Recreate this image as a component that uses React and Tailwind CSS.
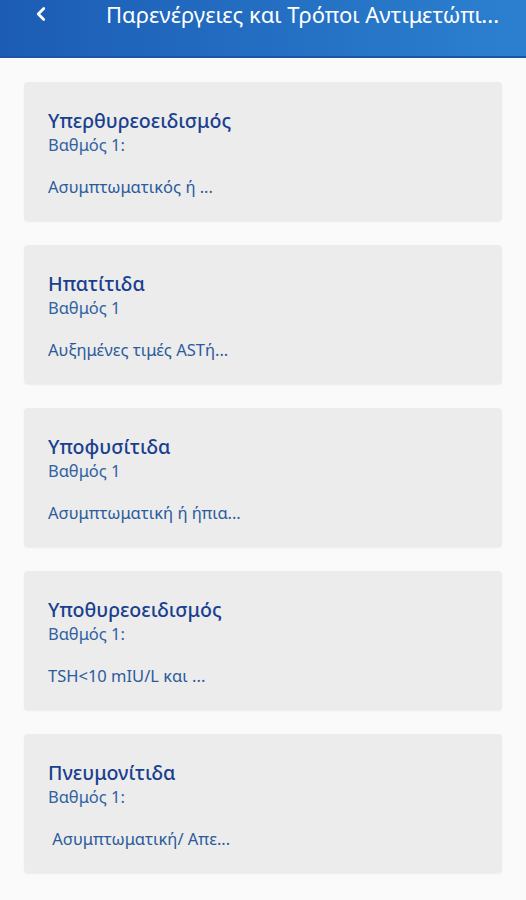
import { ChevronLeft } from 'lucide-react';

const items = [
  { title: 'Υπερθυρεοειδισμός', grade: 'Βαθμός 1:', text: 'Ασυμπτωματικός ή ...' },
  { title: 'Ηπατίτιδα', grade: 'Βαθμός 1', text: 'Αυξημένες τιμές ASTή...' },
  { title: 'Υποφυσίτιδα', grade: 'Βαθμός 1', text: 'Ασυμπτωματική ή ήπια...' },
  { title: 'Υποθυρεοειδισμός', grade: 'Βαθμός 1:', text: 'TSH<10 mIU/L και ...' },
  { title: 'Πνευμονίτιδα', grade: 'Βαθμός 1:', text: ' Ασυμπτωματική/ Απε...' },
];

function Card({ item }) {
  return (
    <div className="h-[139px] rounded-[4px] bg-[#ececec] px-6 pt-[26px] shadow-[0_1px_2px_rgba(0,0,0,0.06)]">
      <h2 className="text-[19.6px] leading-[26px] font-medium text-[#1a3f8f]">{item.title}</h2>
      <p className="text-[16.5px] leading-[22px] text-[#3062a3]">{item.grade}</p>
      <p className="mt-[20px] text-[16.5px] leading-[22px] text-[#2b5b9c] whitespace-pre">{item.text}</p>
    </div>
  );
}

export default function App() {
  return (
    <div className="w-[526px] min-h-[900px] bg-[#fafafa] font-['Noto_Sans',sans-serif]">
      <header className="h-[58px] bg-gradient-to-r from-[#1c5cb5] to-[#2c80cf] border-b-2 border-[#1a56a8]">
        <div className="flex items-center h-[28px] pr-3">
          <ChevronLeft className="ml-[30px] shrink-0 text-white" size={22} strokeWidth={3} />
          <h1 className="ml-[54px] min-w-0 text-[22px] leading-[28px] text-white whitespace-nowrap">
            Παρενέργειες και Τρόποι Αντιμετώπι...
          </h1>
        </div>
      </header>
      <main className="flex flex-col gap-6 px-6 pt-[24px] pb-6">
        {items.map((item) => (
          <Card key={item.title} item={item} />
        ))}
      </main>
    </div>
  );
}
